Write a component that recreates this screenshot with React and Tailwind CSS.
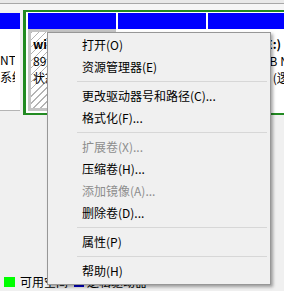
import React from "react";

const menuItems = [
  { label: "打开(O)" },
  { label: "资源管理器(E)" },
  { sep: true },
  { label: "更改驱动器号和路径(C)..." },
  { label: "格式化(F)..." },
  { sep: true },
  { label: "扩展卷(X)...", disabled: true },
  { label: "压缩卷(H)..." },
  { label: "添加镜像(A)...", disabled: true },
  { label: "删除卷(D)..." },
  { sep: true },
  { label: "属性(P)" },
  { sep: true },
  { label: "帮助(H)" },
];

function ContextMenu() {
  return (
    <div className="absolute left-[47px] top-[32px] w-[224px] h-[253px] border border-[#979797] bg-[#f0f0f0] pt-px pb-[2px] shadow-[2px_2px_3px_rgba(0,0,0,0.35)]">
      {menuItems.map((item, i) =>
        item.sep ? (
          <div key={i} className="h-[7px] flex items-center pl-[29px] pr-[3px]">
            <div className="h-px w-full bg-[#d7d7d7]" />
          </div>
        ) : (
          <div
            key={i}
            className={`h-[22px] flex items-center pl-[34px] whitespace-nowrap ${
              item.disabled ? "text-[#8d8d8d]" : "text-black"
            }`}
          >
            {item.label}
          </div>
        )
      )}
    </div>
  );
}

function PartitionText({ name, size, status }) {
  return (
    <div className="leading-[17px] whitespace-nowrap">
      <div className="font-bold">{name}</div>
      <div>{size}</div>
      <div>{status}</div>
    </div>
  );
}

export default function App() {
  return (
    <div className="relative w-[284px] h-[291px] overflow-hidden bg-[#f0f0f0] text-[12px] text-black font-['Noto_Sans_CJK_SC','Noto_Sans',sans-serif] flex flex-col">
      {/* previous row edge */}
      <div className="h-[3px] bg-[#e9e9e9]" />
      <div className="h-px bg-[#a8a8a8]" />
      <div className="h-[6px] bg-[#f6f6f6]" />

      {/* disk row */}
      <div className="flex h-[105px]">
        {/* system partition (clipped) */}
        <div className="w-[20px] shrink-0 flex flex-col pt-[3px]">
          <div className="h-[16px] bg-[#0000ff]" />
          <div className="h-[81px] bg-white pt-[5px]">
            <div className="w-[15px] overflow-hidden">
              <PartitionText name={"\u00a0"} size="NTFS" status="系统分区" />
            </div>
          </div>
          <div className="h-px bg-[#b4b4b4]" />
        </div>
        <div className="w-[3px] shrink-0" />

        {/* extended partition */}
        <div className="w-[270px] shrink-0 border-l-[3px] border-t-2 border-b-2 border-[#228b22] bg-white pt-px pl-[2px] pb-[2px] flex gap-[2px]">
          {/* selected logical drive */}
          <div className="w-[88px] shrink-0 flex flex-col">
            <div className="h-[16px] bg-[#0000ff]" />
            <div className="h-[82px] bg-[#c4c4c4] p-[3px]">
              <div className="h-full overflow-hidden pl-[2px] pt-[3px] bg-[repeating-linear-gradient(135deg,#b4b4b4_0px,#b4b4b4_1px,#ffffff_1px,#ffffff_5px)]">
                <PartitionText name="win10 (D:)" size="89.84 GB NTFS" status="状态良好 (逻辑驱动器)" />
              </div>
            </div>
          </div>
          <div className="w-[88px] shrink-0 flex flex-col">
            <div className="h-[16px] bg-[#0000ff]" />
            <div className="h-[82px] bg-white" />
          </div>
          <div className="flex-1 flex flex-col">
            <div className="h-[16px] bg-[#0000ff]" />
            <div className="h-[82px] bg-white overflow-hidden pl-[14px] pt-[6px]">
              <PartitionText name="新加卷 (E:)" size="146.48 GB NTFS" status="状态良好 (逻辑驱动器)" />
            </div>
          </div>
        </div>
      </div>

      {/* legend */}
      <div className="mt-auto mb-px h-[16px] flex items-center pl-[4px] whitespace-nowrap">
        <div className="w-[11px] h-[10px] bg-[#00ff00]" />
        <span className="ml-[5px]">可用空间</span>
        <div className="ml-[6px] w-[10px] h-[10px] bg-[#0000c8]" />
        <span className="ml-[3px]">逻辑驱动器</span>
      </div>

      <ContextMenu />
    </div>
  );
}
